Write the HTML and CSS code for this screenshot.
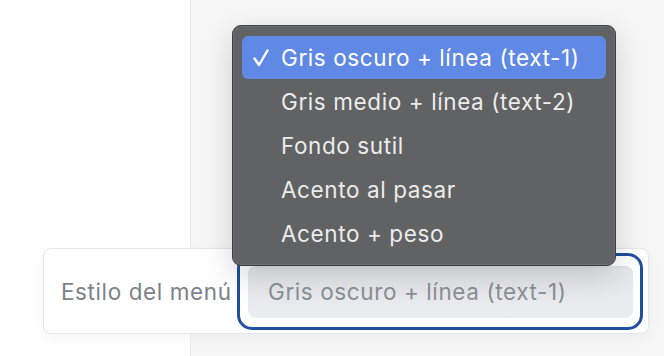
FILE: index.html
```html
<!DOCTYPE html>
<html lang="es">
<head>
<meta charset="utf-8">
<link rel="stylesheet" href="styles.css">
</head>
<body>
<div class="page">
  <div class="card">
    <span class="label">Estilo del menú</span>
    <div class="ring">
      <div class="select">Gris oscuro + línea (text-1)</div>
    </div>
  </div>
  <ul class="menu">
    <li class="item selected">
      <svg class="check" width="16" height="18" viewBox="0 0 16 18"><path d="M1.5 9.5 L6 16 L14.5 1.5" fill="none" stroke="#fff" stroke-width="2.4" stroke-linecap="round" stroke-linejoin="round"/></svg>
      Gris oscuro + línea (text-1)
    </li>
    <li class="item">Gris medio + línea (text-2)</li>
    <li class="item">Fondo sutil</li>
    <li class="item">Acento al pasar</li>
    <li class="item">Acento + peso</li>
  </ul>
</div>
</body>
</html>
```
FILE: styles.css
```css
html, body {
  margin: 0;
  padding: 0;
}
body {
  width: 664px;
  height: 356px;
  overflow: hidden;
  font-family: Inter, "Noto Sans", "Liberation Sans", sans-serif;
  background: linear-gradient(to right, #ffffff 0 190px, #ebebed 190px 191px, #f6f6f7 191px);
}
.page {
  position: relative;
  height: 356px;
  box-sizing: border-box;
  padding: 248px 0 0 43px;
}
.card {
  width: 606px;
  height: 86px;
  box-sizing: border-box;
  border: 1px solid #e3e5e8;
  border-radius: 8px;
  background: #fff;
  box-shadow: 0 4px 14px rgba(0, 0, 0, 0.04);
  display: flex;
  align-items: center;
  justify-content: space-between;
  padding: 0 5px 0 17px;
}
.label {
  font-size: 22.5px;
  letter-spacing: 0.6px;
  color: #7d828a;
}
.ring {
  width: 385px;
  border: 3px solid #1f4f9e;
  border-radius: 15px;
  padding: 10px 7px 9px 8px;
}
.select {
  height: 52px;
  line-height: 52px;
  border-radius: 8px;
  background: linear-gradient(#e6e7ea, #ebecef);
  box-shadow: inset 0 1px 2px rgba(0, 0, 0, 0.04);
  padding-left: 20px;
  font-size: 22.5px;
  letter-spacing: 0.6px;
  color: #8b9098;
}
.menu {
  position: absolute;
  left: 232px;
  top: 25px;
  width: 384px;
  height: 241px;
  box-sizing: border-box;
  margin: 0;
  padding: 10px 9px;
  list-style: none;
  background: #616263;
  border: 1px solid #3f3f40;
  border-radius: 9px;
  box-shadow: inset 0 0 0 1px rgba(255, 255, 255, 0.08), 0 10px 30px rgba(0, 0, 0, 0.16);
}
.item {
  position: relative;
  height: 44px;
  line-height: 43px;
  padding-left: 39px;
  border-radius: 6px;
  font-size: 22.5px;
  letter-spacing: 0.6px;
  color: #ececec;
}
.item.selected {
  height: 43px;
  margin-bottom: 1px;
  background: #6089e5;
  color: #ffffff;
}
.check {
  position: absolute;
  left: 11px;
  top: 13px;
}
```
